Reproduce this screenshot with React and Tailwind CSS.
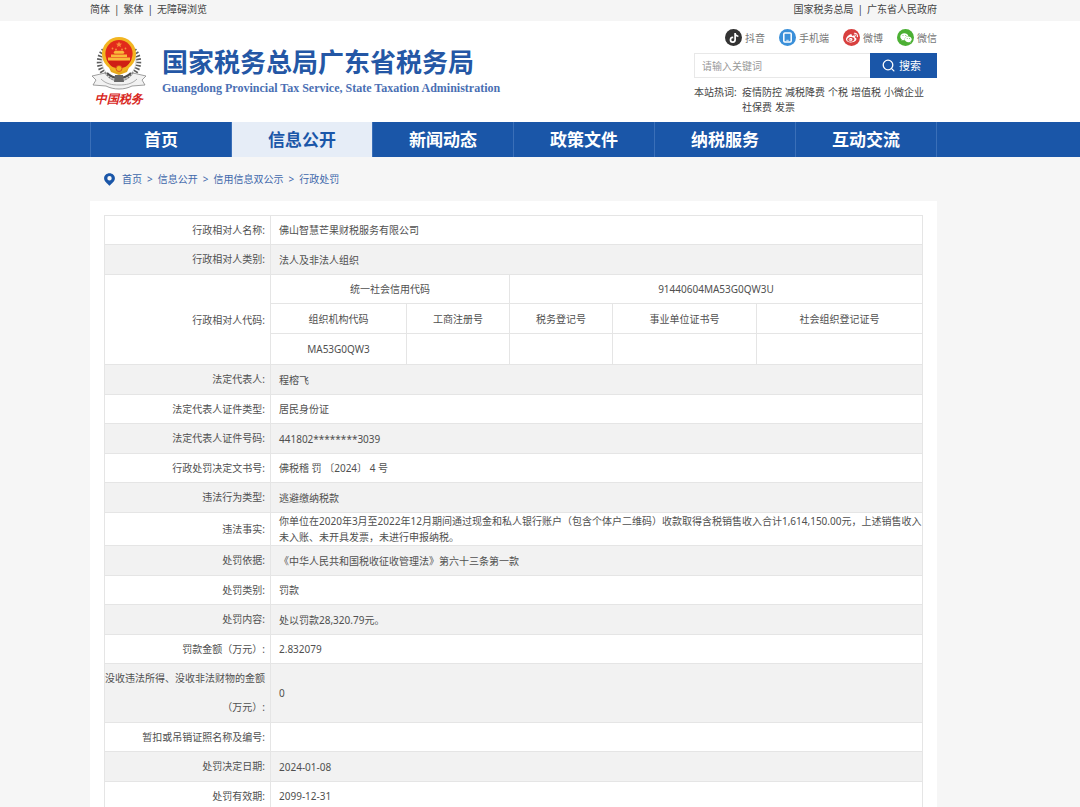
import { FaTiktok, FaWeibo, FaWeixin } from 'react-icons/fa';

const navItems = ['首页', '信息公开', '新闻动态', '政策文件', '纳税服务', '互动交流'];
const crumbs = ['首页', '信息公开', '信用信息双公示', '行政处罚'];
const hotWords = ['疫情防控', '减税降费', '个税', '增值税', '小微企业', '社保费', '发票'];

const socials = [
  { label: '抖音', color: 'bg-[#333333]', icon: <FaTiktok size={10} /> },
  { label: '手机端', color: 'bg-[#3a8fd9]', icon: <TabletIcon /> },
  { label: '微博', color: 'bg-[#d8403f]', icon: <FaWeibo size={12} /> },
  { label: '微信', color: 'bg-[#4cb034]', icon: <FaWeixin size={12} /> },
];

const rows = [
  { label: '行政相对人名称:', value: '佛山智慧芒果财税服务有限公司' },
  { label: '行政相对人类别:', value: '法人及非法人组织' },
  { label: '行政相对人代码:', codes: true },
  { label: '法定代表人:', value: '程榕飞' },
  { label: '法定代表人证件类型:', value: '居民身份证' },
  { label: '法定代表人证件号码:', value: '441802********3039' },
  { label: '行政处罚决定文书号:', value: '佛税稽 罚 〔2024〕 4 号' },
  { label: '违法行为类型:', value: '逃避缴纳税款' },
  {
    label: '违法事实:',
    value:
      '你单位在2020年3月至2022年12月期间通过现金和私人银行账户（包含个体户二维码）收款取得含税销售收入合计1,614,150.00元，上述销售收入未入账、未开具发票，未进行申报纳税。',
  },
  { label: '处罚依据:', value: '《中华人民共和国税收征收管理法》第六十三条第一款' },
  { label: '处罚类别:', value: '罚款' },
  { label: '处罚内容:', value: '处以罚款28,320.79元。' },
  { label: '罚款金额（万元）:', value: '2.832079' },
  { label: '没收违法所得、没收非法财物的金额（万元）:', value: '0' },
  { label: '暂扣或吊销证照名称及编号:', value: '' },
  { label: '处罚决定日期:', value: '2024-01-08' },
  { label: '处罚有效期:', value: '2099-12-31' },
];

function TabletIcon() {
  return (
    <svg width="11" height="11" viewBox="0 0 11 11" fill="none" stroke="currentColor">
      <rect x="1.8" y="1" width="7.4" height="9" rx="1" strokeWidth="1.5" />
      <path d="M4.3 8.3h2.4" strokeWidth="0.8" />
    </svg>
  );
}

function SearchIcon() {
  return (
    <svg width="13" height="13" viewBox="0 0 13 13" fill="none" stroke="currentColor" strokeWidth="1.3" strokeLinecap="round">
      <circle cx="6" cy="6" r="4.8" />
      <path d="M9.6 9.6l2.3 2.3" />
    </svg>
  );
}

function PinIcon() {
  return (
    <svg width="11" height="13" viewBox="0 0 11 13">
      <path
        fill="#1a56a8"
        fillRule="evenodd"
        d="M5.5 0.3C2.500 0.300 0.100 2.500 0.100 5.400c0 2.900 3.200 4.900 5.400 7.300 2.200-2.400 5.400-4.400 5.400-7.300 0-2.900-2.400-5.100-5.400-5.100zM5.500 3.100a2.200 2.200 0 1 1 0 4.400 2.200 2.200 0 0 1 0-4.400z"
      />
    </svg>
  );
}

function Emblem() {
  return (
    <svg width="56" height="54" viewBox="0 0 56 54">
      {/* wheat ears */}
      <g fill="none" strokeLinecap="round">
        <path d="M13 14C4 25 8 38 24 46" stroke="#5c5c5c" strokeWidth="5" strokeDasharray="1.6 1.6" strokeLinecap="butt" />
        <path d="M43 14C52 25 48 38 32 46" stroke="#5c5c5c" strokeWidth="5" strokeDasharray="1.6 1.6" strokeLinecap="butt" />
        <path d="M15 14C7 25 11 37 25 45M41 14C49 25 45 37 31 45" stroke="#c9c9c9" strokeWidth="1" />
      </g>
      {/* ribbon */}
      <path d="M1 40l13-3c3 5 8 8 14 8s11-3 14-8l13 3-4 4 3 5-13 1c-4 2-8 3-13 3s-9-1-13-3l-13-1 3-5z" fill="#f2f2f2" stroke="#888" strokeWidth="0.8" />
      <path d="M10 43c5 5 11 6 18 6s13-1 18-6" fill="none" stroke="#999" strokeWidth="0.8" />
      <path d="M16 37c4 4 7 5 12 5s8-1 12-5" fill="none" stroke="#4d4d4d" strokeWidth="2" />
      <path d="M24 39l-1 7h10l-1-7z" fill="#666" />
      {/* national emblem */}
      <path d="M17 29h22l-3 7-8 3-8-3z" fill="#e6a91c" />
      <circle cx="28" cy="18" r="17" fill="#f2b521" />
      <circle cx="28" cy="17.5" r="13.6" fill="#e22a1b" />
      <path d="M15.5 23c3 8 7 9 12.5 9s9.5-1 12.5-9c-8 3-17 3-25 0z" fill="#cf1f15" />
      <path d="M17 21.5h22v3H17zM20 18.5h16v2.4H20zM22.5 16.200l1.5-1.400h8l1.5 1.400-1 1.600h-9z" fill="#f9b93a" />
      <path d="M28 5.500l0.900 2 2.200.2-1.700 1.400.5 2.100-1.900-1.100-1.900 1.100.5-2.100-1.700-1.400 2.200-.2z" fill="#f98f3a" />
      <g fill="#f98f3a">
        <circle cx="21.5" cy="12.5" r="0.9" />
        <circle cx="25" cy="13.5" r="0.9" />
        <circle cx="31" cy="13.5" r="0.9" />
        <circle cx="34.5" cy="12.5" r="0.9" />
      </g>
      <path d="M16 27c3 5 7 8 12 8s9-3 12-8" fill="none" stroke="#f2b521" strokeWidth="2" />
      <circle cx="28" cy="32.5" r="3" fill="#f2b521" stroke="#d3401a" strokeWidth="0.8" />
    </svg>
  );
}

function TopBar() {
  return (
    <div className="bg-[#f5f5f5]">
      <div className="ml-[90px] flex h-[21px] max-w-[847px] items-start justify-between pt-px text-[#444]">
        <div className="flex gap-1">
          <a href="#">简体</a>
          <span>|</span>
          <a href="#">繁体</a>
          <span>|</span>
          <a href="#">无障碍浏览</a>
        </div>
        <div className="flex gap-1">
          <a href="#">国家税务总局</a>
          <span>|</span>
          <a href="#">广东省人民政府</a>
        </div>
      </div>
    </div>
  );
}

function Header() {
  return (
    <header className="bg-white">
      <div className="ml-[90px] flex h-[101px] max-w-[847px] justify-between">
        <a href="#" className="flex">
          <div className="flex w-[58px] flex-col items-center pt-[15px]">
            <Emblem />
            <span className="font-serif text-[12px] leading-[18px] font-bold text-[#d8261c] italic">中国税务</span>
          </div>
          <div className="ml-[14px] pt-6 text-[#2457a5]">
            <h1 className="text-[26px] leading-[35px] font-bold whitespace-nowrap">国家税务总局广东省税务局</h1>
            <p className="font-['Liberation_Serif',serif] text-[12px] leading-4 font-bold whitespace-nowrap text-[#4a6fb3]">
              Guangdong Provincial Tax Service, State Taxation Administration
            </p>
          </div>
        </a>
        <div className="w-[243px] pt-2">
          <div className="flex justify-end gap-[14px] text-[#777]">
            {socials.map((s) => (
              <a key={s.label} href="#" className="flex items-center gap-[3px]">
                <span className={`flex size-[17px] items-center justify-center rounded-full text-white ${s.color}`}>{s.icon}</span>
                {s.label}
              </a>
            ))}
          </div>
          <form className="mt-[7px] flex h-[25px]" onSubmit={(e) => e.preventDefault()}>
            <input
              type="text"
              aria-label="搜索"
              placeholder="请输入关键词"
              className="min-w-0 flex-1 border border-r-0 border-[#e8e8e8] px-[7px] outline-none placeholder:text-[#999]"
            />
            <button type="submit" className="flex w-[67px] items-center justify-center gap-1 bg-[#1a56a8] pr-1 text-[11px] text-white">
              <SearchIcon />
              搜索
            </button>
          </form>
          <div className="mt-[7px] flex leading-[15px] text-[#444]">
            <span className="w-12 shrink-0">本站热词:</span>
            <div className="flex flex-wrap gap-x-[3px]">
              {hotWords.map((w) => (
                <a key={w} href="#">
                  {w}
                </a>
              ))}
            </div>
          </div>
        </div>
      </div>
    </header>
  );
}

function Nav() {
  return (
    <nav className="bg-[#1a56a8]">
      <div className="ml-[90px] flex h-[35px] max-w-[847px] border-l border-[#3a6fb8]">
        {navItems.map((item) => (
          <a
            key={item}
            href="#"
            className={`flex flex-1 items-center justify-center border-r border-[#3a6fb8] pt-px text-[17px] font-bold ${
              item === '信息公开' ? 'bg-[#e6edf7] text-[#1a56a8]' : 'text-white'
            }`}
          >
            {item}
          </a>
        ))}
      </div>
    </nav>
  );
}

function CodeTable() {
  return (
    <table className="w-full table-fixed border-separate border-spacing-0 text-center [&_td]:border-[#e5e5e5] [&_td:not(:last-child)]:border-r [&_tr:not(:last-child)>td]:border-b">
      <colgroup>
        <col className="w-[136px]" />
        <col className="w-[103px]" />
        <col className="w-[103px]" />
        <col className="w-[144px]" />
        <col />
      </colgroup>
      <tbody>
        <tr className="h-[29px]">
          <td colSpan={2}>统一社会信用代码</td>
          <td colSpan={3}>91440604MA53G0QW3U</td>
        </tr>
        <tr className="h-[30px]">
          <td>组织机构代码</td>
          <td>工商注册号</td>
          <td>税务登记号</td>
          <td>事业单位证书号</td>
          <td>社会组织登记证号</td>
        </tr>
        <tr className="h-[30px]">
          <td>MA53G0QW3</td>
          <td></td>
          <td></td>
          <td></td>
          <td></td>
        </tr>
      </tbody>
    </table>
  );
}

export default function App() {
  return (
    <div className="min-h-screen bg-[#f6f6f6] font-['Noto_Sans','Noto_Sans_CJK_SC',sans-serif] text-[10px] leading-4 text-[#505050]">
      <TopBar />
      <Header />
      <Nav />
      <main className="ml-[90px] max-w-[847px]">
        <div className="flex h-[44px] items-center gap-[7px] pl-[14px] text-[#3f68ab]">
          <PinIcon />
          <div className="flex gap-[5px]">
            {crumbs.map((c, i) => (
              <span key={c} className="flex gap-[5px]">
                {i > 0 && <span>&gt;</span>}
                <a href="#">{c}</a>
              </span>
            ))}
          </div>
        </div>
        <div className="bg-white p-[14px]">
          <table className="w-full table-fixed border-separate border-spacing-0 border-t border-l border-[#e5e5e5]">
            <colgroup>
              <col className="w-[166px]" />
              <col />
            </colgroup>
            <tbody>
              {rows.map((row) => (
                <tr key={row.label} className="odd:h-[29px] odd:leading-[28px] even:h-[30px] even:bg-[#f2f2f2] even:leading-[29px]">
                  <th scope="row" className="border-r border-b border-[#e5e5e5] pr-[5px] text-right font-normal">
                    {row.label}
                  </th>
                  {row.codes ? (
                    <td className="border-r border-b border-[#e5e5e5] leading-4">
                      <CodeTable />
                    </td>
                  ) : (
                    <td className="border-r border-b border-[#e5e5e5] pl-2 leading-4">{row.value}</td>
                  )}
                </tr>
              ))}
            </tbody>
          </table>
        </div>
      </main>
    </div>
  );
}
